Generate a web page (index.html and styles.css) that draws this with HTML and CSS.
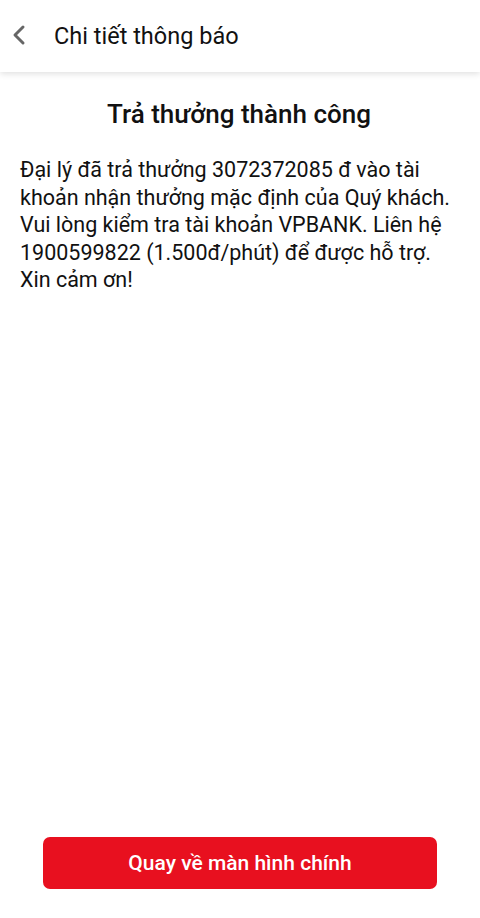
FILE: index.html
```html
<!DOCTYPE html>
<html lang="vi">
<head>
<meta charset="utf-8">
<link rel="stylesheet" href="styles.css">
</head>
<body>
<div class="screen">
  <header class="topbar">
    <span class="back">
      <svg width="16" height="22" viewBox="0 0 16 22"><path d="M12 3 L4 11 L12 19" fill="none" stroke="#666" stroke-width="3" stroke-linecap="round" stroke-linejoin="round"/></svg>
    </span>
    <h1 class="title">Chi tiết thông báo</h1>
  </header>
  <main class="content">
    <h2 class="heading">Trả thưởng thành công</h2>
    <p class="message">Đại lý đã trả thưởng 3072372085 đ vào tài khoản nhận thưởng mặc định của Quý khách. Vui lòng kiểm tra tài khoản VPBANK. Liên hệ 1900599822 (1.500đ/phút) để được hỗ trợ. Xin cảm ơn!</p>
  </main>
  <footer class="bottom">
    <button class="primary">Quay về màn hình chính</button>
  </footer>
</div>
</body>
</html>
```
FILE: styles.css
```css
html, body { margin: 0; padding: 0; }
body { font-family: Roboto, "Noto Sans", sans-serif; background: #fff; color: #111; }
.screen { width: 480px; height: 918px; display: flex; flex-direction: column; overflow: hidden; }
.topbar { height: 72px; display: flex; align-items: center; background: #fff; box-shadow: 0 2px 6px rgba(0,0,0,0.12); position: relative; z-index: 1; flex-shrink: 0; }
.back { width: 54px; display: flex; justify-content: flex-start; padding-left: 11px; box-sizing: border-box; margin-top: -2px; }
.back svg { display: block; }
.title { margin: 0; font-size: 23.5px; font-weight: 400; color: #111; margin-top: -1px; }
.content { flex: 1; padding: 0 22px 0 20px; }
.heading { margin: 25px 0 0; text-align: center; font-size: 26px; font-weight: 500; line-height: 34px; color: #111; }
.message { margin: 25px 0 0; font-size: 21.5px; line-height: 27.5px; color: #111; }
.bottom { display: flex; justify-content: center; padding-bottom: 29px; flex-shrink: 0; }
.primary { width: 394px; height: 52px; border: none; border-radius: 7px; background: #e8101f; color: #fff; font-family: Roboto, "Noto Sans", sans-serif; font-size: 21px; font-weight: 500; padding: 0; }
```
